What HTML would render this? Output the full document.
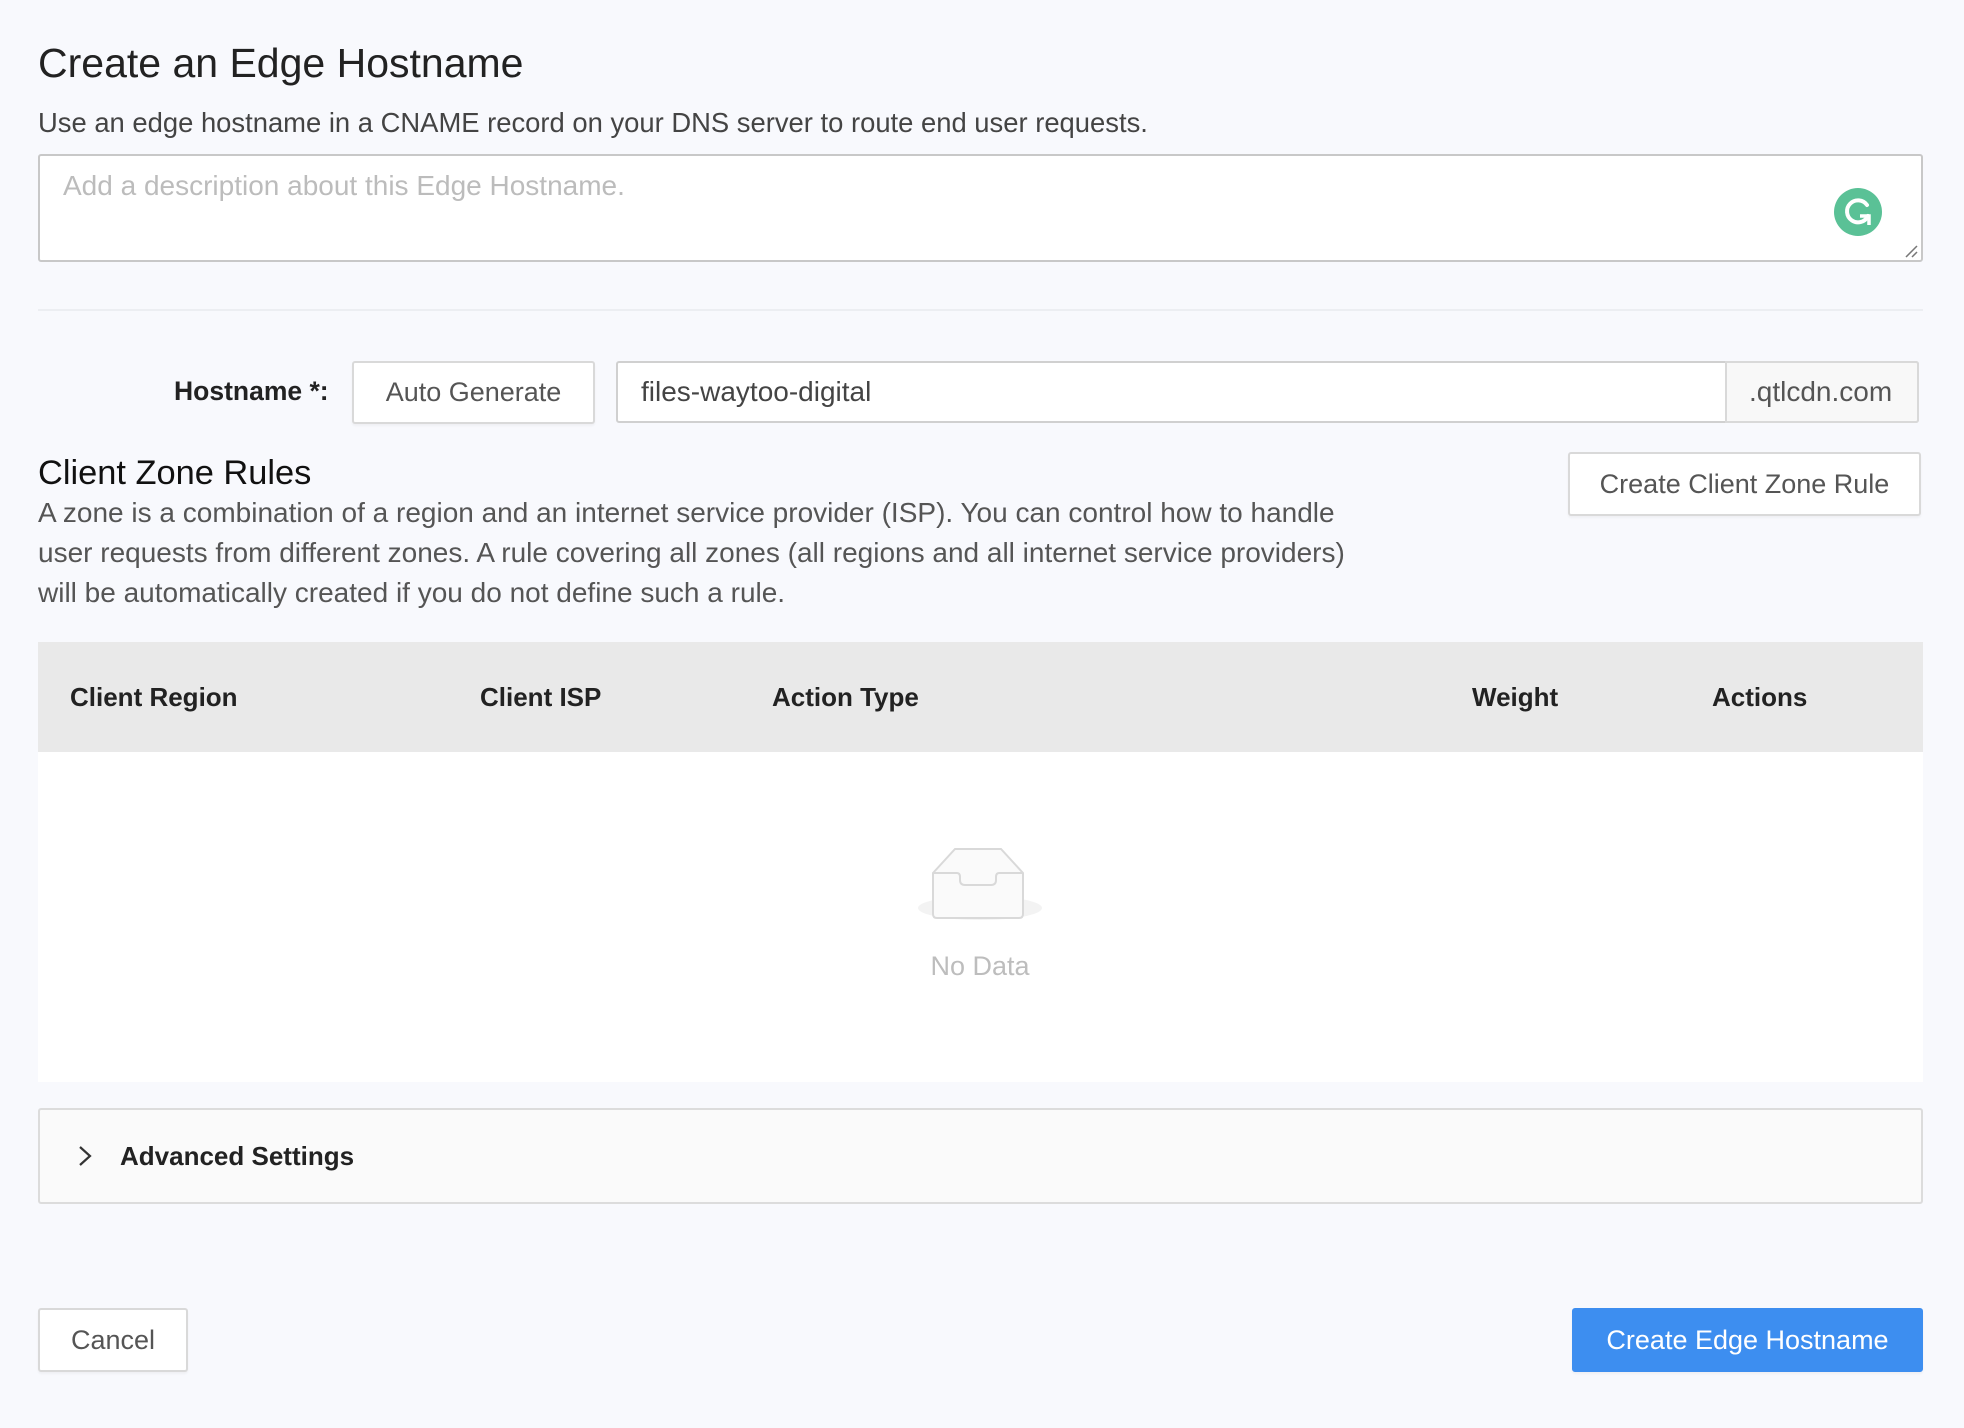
<!DOCTYPE html>
<html><head><meta charset="utf-8"><style>
*{box-sizing:border-box;margin:0;padding:0}
body{width:1964px;height:1428px;background:#f8f9fd;font-family:"Liberation Sans",Arial,sans-serif;position:relative;overflow:hidden;color:#444}
.a{position:absolute;white-space:nowrap}
.btn{position:absolute;background:#fff;border:2px solid #d9d9d9;border-radius:3px;display:flex;align-items:center;justify-content:center;font-size:27px;color:#555;box-shadow:0 2px 2px rgba(0,0,0,.04)}
</style></head><body>
<div class="a" style="left:38px;top:40px;font-size:41px;color:#222;">Create an Edge Hostname</div>
<div class="a" style="left:38px;top:107px;font-size:27.4px;color:#444;">Use an edge hostname in a CNAME record on your DNS server to route end user requests.</div>
<div class="a" style="left:38px;top:154px;width:1885px;height:108px;background:#fff;border:2px solid #c8c8c8;border-radius:3px;"></div>
<div class="a" style="left:63px;top:170px;font-size:28px;color:#bcbcbc;">Add a description about this Edge Hostname.</div>
<svg class="a" style="left:1834px;top:188px" width="48" height="48" viewBox="0 0 48 48"><circle cx="24" cy="24" r="24" fill="#5ac196"/><path d="M33 17 A11 11 0 1 0 34 28" fill="none" stroke="#fff" stroke-width="4" stroke-linecap="round"/><path d="M26 28 H35 V37" fill="none" stroke="#fff" stroke-width="3.5"/></svg>
<svg class="a" style="left:1904px;top:244px" width="14" height="14"><path d="M2 13 L13 2 M8 13 L13 8" stroke="#777" stroke-width="1.5"/></svg>
<div class="a" style="left:38px;top:309px;width:1885px;height:2px;background:#eceef2;"></div>

<div class="a" style="left:174px;top:376px;font-size:26.5px;font-weight:bold;color:#222;">Hostname *:</div>
<div class="btn" style="left:352px;top:361px;width:243px;height:63px;">Auto Generate</div>
<div class="a" style="left:616px;top:361px;width:1303px;height:62px;background:#fff;border:2px solid #d0d0d0;border-radius:3px;"></div>
<div class="a" style="left:1725px;top:361px;width:194px;height:62px;background:#f8f8f8;border:2px solid #d9d9d9;border-radius:0 3px 3px 0;"></div>
<div class="a" style="left:641px;top:376px;font-size:28px;color:#444;">files-waytoo-digital</div>
<div class="a" style="left:1749px;top:376px;font-size:28px;color:#555;">.qtlcdn.com</div>

<div class="a" style="left:38px;top:454px;font-size:34.4px;color:#111;">Client Zone Rules</div>
<div class="a" style="left:38px;top:493px;font-size:28px;color:#555;line-height:40px;">A zone is a combination of a region and an internet service provider (ISP). You can control how to handle<br>user requests from different zones. A rule covering all zones (all regions and all internet service providers)<br>will be automatically created if you do not define such a rule.</div>
<div class="btn" style="left:1568px;top:452px;width:353px;height:64px;">Create Client Zone Rule</div>

<div class="a" style="left:38px;top:642px;width:1885px;height:110px;background:#e9e9e9;"></div>
<div class="a" style="left:38px;top:752px;width:1885px;height:330px;background:#fff;"></div>
<div class="a" style="left:70px;top:682px;font-size:26px;color:#222;font-weight:bold;">Client Region</div>
<div class="a" style="left:480px;top:682px;font-size:26px;color:#222;font-weight:bold;">Client ISP</div>
<div class="a" style="left:772px;top:682px;font-size:26px;color:#222;font-weight:bold;">Action Type</div>
<div class="a" style="left:1472px;top:682px;font-size:26px;color:#222;font-weight:bold;">Weight</div>
<div class="a" style="left:1712px;top:682px;font-size:26px;color:#222;font-weight:bold;">Actions</div>
<svg class="a" style="left:915px;top:846px" width="130" height="82" viewBox="0 0 130 82"><ellipse cx="65" cy="62" rx="62" ry="12" fill="#f3f3f3"/><path d="M18 27 L40 3 H86 L108 27 V68 Q108 72 104 72 H22 Q18 72 18 68 Z" fill="#fafafa" stroke="#d9d9d9" stroke-width="2"/><path d="M18 27 H42 Q45 27 45 31 V34 Q45 39 50 39 H76 Q81 39 81 34 V31 Q81 27 84 27 H108" fill="none" stroke="#d9d9d9" stroke-width="2"/></svg>
<div class="a" style="left:920px;top:951px;width:120px;text-align:center;font-size:27px;color:#bdbdbd;">No Data</div>

<div class="a" style="left:38px;top:1108px;width:1885px;height:96px;background:#fafafa;border:2px solid #dcdcdc;border-radius:3px;"></div>
<svg class="a" style="left:76px;top:1145px" width="18" height="22"><path d="M4 2 L14 11 L4 20" fill="none" stroke="#333" stroke-width="2.2"/></svg>
<div class="a" style="left:120px;top:1141px;font-size:26px;color:#222;font-weight:bold;">Advanced Settings</div>

<div class="btn" style="left:38px;top:1308px;width:150px;height:64px;">Cancel</div>
<div class="btn" style="left:1572px;top:1308px;width:351px;height:64px;background:#3d8ef0;border-color:#3d8ef0;color:#fff;">Create Edge Hostname</div>
</body></html>
